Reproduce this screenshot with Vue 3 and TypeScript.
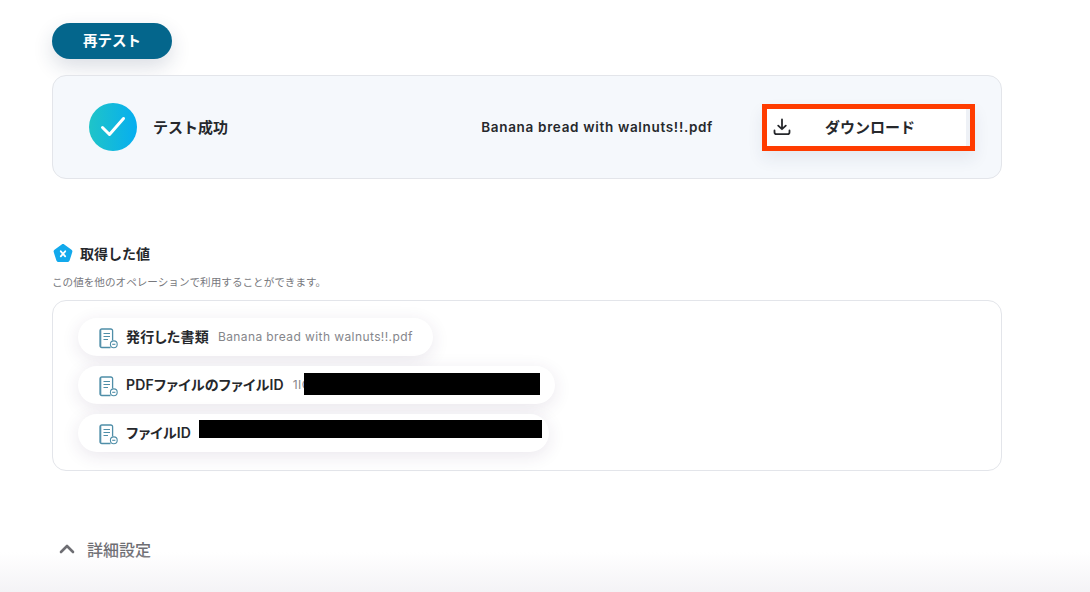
<script setup lang="ts">
const values = [
  { label: '発行した書類', value: 'Banana bread with walnuts!!.pdf', width: 355, mask: 0 },
  { label: 'PDFファイルのファイルID', value: '1IQ', width: 477, mask: 236 },
  { label: 'ファイルID', value: '', width: 471, mask: 343 }
]
</script>

<template>
  <main class="page">
    <button class="retest">再テスト</button>

    <section class="result">
      <span class="check">
        <svg width="26" height="24" viewBox="0 0 26 24" fill="none">
          <path d="M2.500 12.500l7 7L23.500 3.500" stroke="#fff" stroke-width="3" stroke-linecap="round" stroke-linejoin="round" />
        </svg>
      </span>
      <span class="result-label">テスト成功</span>
      <span class="file-name">Banana bread with walnuts!!.pdf</span>
      <div class="download-frame">
        <button class="download">
          <svg width="18" height="18" viewBox="0 0 18 18" fill="none">
            <path
              d="M9 1.500v9.500M5.200 7.600 9 11.200l3.800-3.600M1.500 12.500v1.800c0 1.100.8 1.900 1.900 1.900h11.200c1.100 0 1.900-.8 1.900-1.900v-1.800"
              stroke="#26282c"
              stroke-width="1.800"
              stroke-linecap="round"
              stroke-linejoin="round"
            />
          </svg>
          <span>ダウンロード</span>
        </button>
      </div>
    </section>

    <div class="values-head">
      <svg width="22" height="22" viewBox="0 0 22 22">
        <path d="M9.700 1.400c.8-.6 1.800-.6 2.600 0l7.200 5.300c.8.6 1.100 1.500.8 2.400l-2.700 8.500c-.3.900-1.100 1.500-2.100 1.500H6.500c-1 0-1.800-.6-2.100-1.500L1.700 9.100c-.3-.9 0-1.800.8-2.400z" fill="#12a9ec" />
        <path d="M8.800 8.300l4.400 5M13.200 8.300l-4.400 5" stroke="#fff" stroke-width="1.800" stroke-linecap="round" />
      </svg>
      <span>取得した値</span>
    </div>
    <p class="values-note">この値を他のオペレーションで利用することができます。</p>

    <section class="values">
      <div v-for="item in values" :key="item.label" class="chip" :style="{ width: item.width + 'px' }">
        <svg class="doc" width="19" height="21" viewBox="0 0 19 21" fill="none">
          <path
            d="M11.500 19.500H2.800A1.800 1.800 0 0 1 1 17.700V2.800A1.800 1.800 0 0 1 2.800 1h9a1.800 1.800 0 0 1 1.800 1.800v9.700"
            stroke="#4f8ea8"
            stroke-width="1.300"
          />
          <path d="M1.700 1.800v17" stroke="#4f8ea8" stroke-width="1.200" />
          <path d="M4.500 5.500h6.500M4.500 8.500h6.500M4.500 11.500h4.500" stroke="#4f8ea8" stroke-width="1.100" />
          <circle cx="14.800" cy="16.300" r="3.400" fill="#fff" stroke="#4f8ea8" stroke-width="1.100" />
          <path d="M13.200 16.300h3.200" stroke="#4f8ea8" stroke-width="1.100" />
        </svg>
        <span class="chip-label">{{ item.label }}</span>
        <span class="chip-value">{{ item.value }}</span>
        <span v-if="item.mask" class="mask" :class="{ high: !item.value }" :style="{ width: item.mask + 'px' }"></span>
      </div>
    </section>

    <div class="details">
      <svg width="16" height="10" viewBox="0 0 16 10" fill="none">
        <path d="M2 8l6-6 6 6" stroke="#6e6e73" stroke-width="2.600" stroke-linecap="round" stroke-linejoin="round" />
      </svg>
      <span>詳細設定</span>
    </div>
    <div class="fade"></div>
  </main>
</template>

<style>
html,
body {
  margin: 0;
  background: #fff;
  overflow: hidden;
}
</style>

<style scoped>
.page {
  position: relative;
  width: 1090px;
  height: 592px;
  box-sizing: border-box;
  padding: 23px 88px 0 52px;
  overflow: hidden;
  font-family: Inter, 'Noto Sans CJK JP', sans-serif;
  color: #26282c;
}
.retest {
  display: block;
  width: 120px;
  height: 36px;
  border: none;
  border-radius: 18px;
  background: #04668c;
  color: #fff;
  font: inherit;
  font-size: 14.500px;
  font-weight: 700;
  line-height: 36px;
  padding: 0;
  box-shadow: 0 8px 20px rgba(30, 50, 90, 0.16);
}
.result {
  display: flex;
  align-items: center;
  height: 104px;
  box-sizing: border-box;
  margin-top: 16px;
  padding-left: 36px;
  border: 1px solid #e3e5ea;
  border-radius: 14px;
  background: #f5f8fc;
}
.check {
  display: flex;
  align-items: center;
  justify-content: center;
  width: 48px;
  height: 48px;
  border-radius: 50%;
  background: linear-gradient(90deg, #1fc4c8, #06aef0);
}
.result-label {
  margin: 0 0 2px 16px;
  font-size: 15px;
  font-weight: 600;
}
.file-name {
  margin-left: auto;
  font-size: 13.500px;
  font-weight: 600;
  letter-spacing: 0.05em;
}
.download-frame {
  box-sizing: border-box;
  width: 213px;
  height: 47px;
  margin: 0 26px 0 49px;
  border: 5px solid #ff3c00;
  background: #fff;
  box-shadow: 0 8px 16px rgba(40, 50, 90, 0.08);
}
.download {
  display: flex;
  align-items: center;
  width: 100%;
  height: 100%;
  padding: 0 0 0 6px;
  border: none;
  border-right: 4px solid #eef1f6;
  background: #fff;
  color: inherit;
  font: inherit;
  font-size: 15px;
  font-weight: 600;
}
.download span {
  margin-left: 34px;
  padding-bottom: 2px;
}
.values-head {
  display: flex;
  align-items: center;
  gap: 6px;
  margin-top: 64px;
  height: 22px;
  font-size: 14px;
  font-weight: 600;
}
.values-head span {
  padding-bottom: 2px;
}
.values-note {
  margin: 11px 0 0;
  font-size: 10.600px;
  line-height: 14px;
  color: #77787d;
}
.values {
  display: flex;
  flex-direction: column;
  gap: 10px;
  height: 171px;
  box-sizing: border-box;
  margin-top: 10px;
  padding: 17px 0 0 25px;
  border: 1px solid #e3e5ea;
  border-radius: 14px;
}
.chip {
  position: relative;
  display: flex;
  align-items: center;
  height: 38px;
  box-sizing: border-box;
  padding-left: 21px;
  border-radius: 19px;
  background: #fff;
  box-shadow: 0 4px 18px rgba(60, 40, 90, 0.11);
}
.doc {
  margin-top: 2px;
}
.chip-label {
  margin-left: 8px;
  padding-bottom: 2px;
  font-size: 14px;
  font-weight: 600;
  font-feature-settings: 'palt';
  letter-spacing: 0.2px;
  white-space: nowrap;
}
.chip-value {
  margin-left: 9px;
  padding-bottom: 2px;
  font-size: 12px;
  letter-spacing: 0.034em;
  color: #85868b;
  white-space: nowrap;
}
.mask {
  position: absolute;
  right: 15px;
  top: 7px;
  height: 22px;
  background: #000;
}
.mask.high {
  right: 7px;
  top: 6px;
  height: 18px;
}
.details {
  display: flex;
  align-items: center;
  gap: 12px;
  margin: 66px 0 0 7px;
  font-size: 16px;
  font-weight: 500;
  color: #6e6e73;
}
.fade {
  position: absolute;
  left: 0;
  right: 0;
  bottom: 0;
  height: 40px;
  background: linear-gradient(rgba(244, 243, 246, 0), #f4f3f6);
  pointer-events: none;
}
</style>
